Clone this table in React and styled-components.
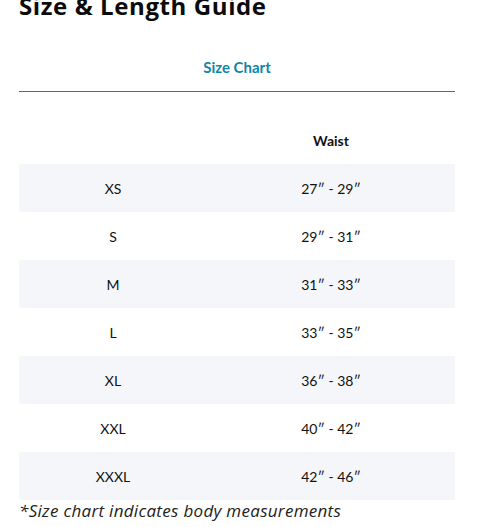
import React from 'react';
import styled, { createGlobalStyle } from 'styled-components';

const Global = createGlobalStyle`
  body { margin: 0; background: #fff; font-family: Lato, "Open Sans", sans-serif; color: #111; }
`;

const Page = styled.div`padding: 0 22px 0 19px; width: 436px;`;
const Title = styled.h1`font-size: 24px; font-weight: 700; line-height: 28px; margin: -8px 0 0; color: #0b0b0b; font-family: "Open Sans", sans-serif; letter-spacing: 0.6px;`;
const Tabs = styled.div`margin-top: 37px; border-bottom: 1px solid #17809c; padding-bottom: 15px; text-align: center;`;
const Tab = styled.span`font-size: 15px; font-weight: 700; color: #0f86a6;`;
const Table = styled.div`margin-top: 24px; display: flex; flex-direction: column;`;
const Row = styled.div`
  display: grid; grid-template-columns: 188px 248px; height: 48px; align-items: center;
  background: ${({ $shade }) => ($shade ? '#f5f6fa' : '#fff')};
`;
const Cell = styled.div`text-align: center; font-weight: ${({ $bold }) => ($bold ? 700 : 400)}; font-size: 14px;`;
const Note = styled.p`margin: 0; font-size: 17px; line-height: 22px; font-style: italic; color: #222; font-family: "Open Sans", sans-serif; letter-spacing: 0.3px;`;

const sizes = [
  ['XS', '27″ - 29″'],
  ['S', '29″ - 31″'],
  ['M', '31″ - 33″'],
  ['L', '33″ - 35″'],
  ['XL', '36″ - 38″'],
  ['XXL', '40″ - 42″'],
  ['XXXL', '42″ - 46″'],
];

export default function App() {
  return (
    <Page>
      <Global />
      <Title>Size &amp; Length Guide</Title>
      <Tabs><Tab>Size Chart</Tab></Tabs>
      <Table>
        <Row><Cell /><Cell $bold>Waist</Cell></Row>
        {sizes.map(([s, w], i) => (
          <Row key={s} $shade={i % 2 === 0}>
            <Cell>{s}</Cell>
            <Cell>{w}</Cell>
          </Row>
        ))}
      </Table>
      <Note>*Size chart indicates body measurements</Note>
    </Page>
  );
}
